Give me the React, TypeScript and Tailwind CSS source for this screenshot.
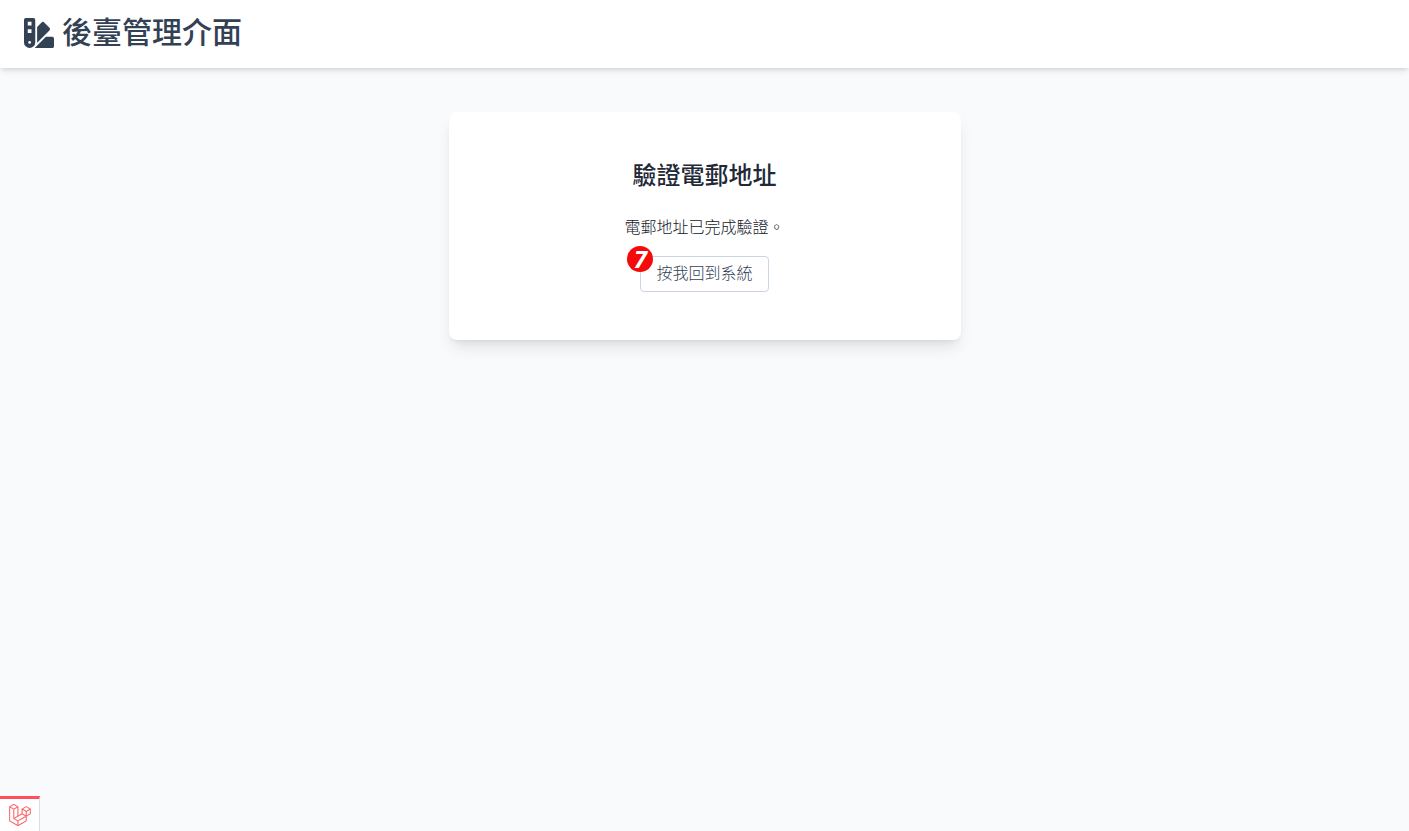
import { FaLaravel, FaSwatchbook } from "react-icons/fa";

export default function App() {
  return (
    <div className="flex min-h-screen flex-col bg-[#f8fafc] font-['Noto_Sans_CJK_TC',sans-serif]">
      <header className="flex h-17 items-start gap-2 bg-white px-6 text-[#334155] shadow-md">
        <FaSwatchbook className="mt-[18px] size-[30px]" aria-hidden="true" />
        <h1 className="mt-3 text-3xl leading-9 font-medium">後臺管理介面</h1>
      </header>
      <main className="flex flex-1 flex-col items-center px-4 pt-11">
        <section className="flex w-full max-w-lg flex-col items-center rounded-lg bg-white px-12 pt-[46px] pb-12 shadow-lg">
          <h2 className="text-2xl leading-8 font-medium text-[#1f2937]">驗證電郵地址</h2>
          <p className="mt-6 text-base leading-6 font-light text-[#111827]">電郵地址已完成驗證。</p>
          <div className="relative mt-[18px]">
            <button
              type="button"
              className="flex h-9 items-start rounded-sm border border-[#cbd5e1] px-[15px] pt-[3px] text-base leading-6 font-light text-[#334155]"
            >
              按我回到系統
            </button>
            <span className="absolute -top-2.5 -left-[13px] flex size-[26px] items-center justify-center rounded-full bg-[#f40a0a] font-['Noto_Sans',sans-serif] text-2xl leading-6 font-bold text-white italic">
              7
            </span>
          </div>
        </section>
      </main>
      <footer className="flex">
        <a
          href="#debug"
          aria-label="Laravel"
          className="flex h-[35px] w-10 items-center justify-center border-t-3 border-r border-t-[#ff4f5a] border-r-[#dddddd] bg-white text-[#f9575c]"
        >
          <FaLaravel className="size-[22px]" stroke="currentColor" strokeWidth="6" />
        </a>
      </footer>
    </div>
  );
}
